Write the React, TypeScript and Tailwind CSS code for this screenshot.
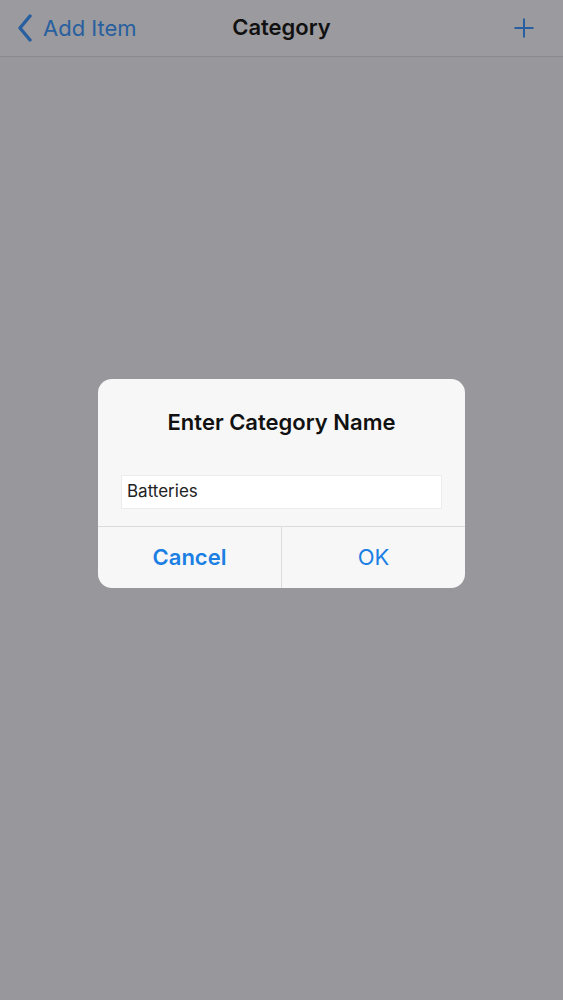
import { Plus } from "lucide-react"

function NavBar() {
    return (
        <div className="relative flex h-[57px] items-center border-b border-[#8a898d] bg-[#9b9a9e] px-[17px]">
            <div className="flex items-center gap-[10px] text-[#28609f]">
                <svg width="16" height="28" viewBox="0 0 16 28" fill="none">
                    <path d="M13 2 L3 14 L13 26" stroke="currentColor" strokeWidth="3.4" strokeLinecap="round" strokeLinejoin="round" />
                </svg>
                <span className="text-[22px] leading-none">Add Item</span>
            </div>
            <div className="absolute inset-x-0 top-0 flex h-[53px] items-center justify-center">
                <span className="text-[22px] font-semibold leading-none text-[#111]">Category</span>
            </div>
            <Plus className="ml-auto mr-[7px] h-[30px] w-[30px] text-[#28609f]" strokeWidth={1.6} />
        </div>
    )
}

function CategoryDialog() {
    return (
        <div className="w-[367px] overflow-hidden rounded-[14px] bg-[#f7f7f8]">
            <div className="flex flex-col items-center px-[23px] pb-[17px] pt-[28px]">
                <h2 className="text-[22px] font-semibold leading-[30px] text-[#111]">Enter Category Name</h2>
                <div className="mt-[38px] flex h-[34px] w-full items-center border border-[#ececec] bg-white px-[5px]">
                    <span className="text-[17px] text-[#222]">Batteries</span>
                </div>
            </div>
            <div className="flex h-[62px] border-t border-[#dcdcde]">
                <button className="flex-1 text-[22px] font-semibold text-[#1b7fe3]">Cancel</button>
                <button className="flex-1 border-l border-[#dcdcde] text-[22px] text-[#1b7fe3]">OK</button>
            </div>
        </div>
    )
}

export default function App() {
    return (
        <div className="flex h-[1000px] w-[563px] flex-col bg-[#98979b] font-['Inter','Liberation_Sans',sans-serif]">
            <NavBar />
            <div className="flex justify-center pt-[322px]">
                <CategoryDialog />
            </div>
        </div>
    )
}
